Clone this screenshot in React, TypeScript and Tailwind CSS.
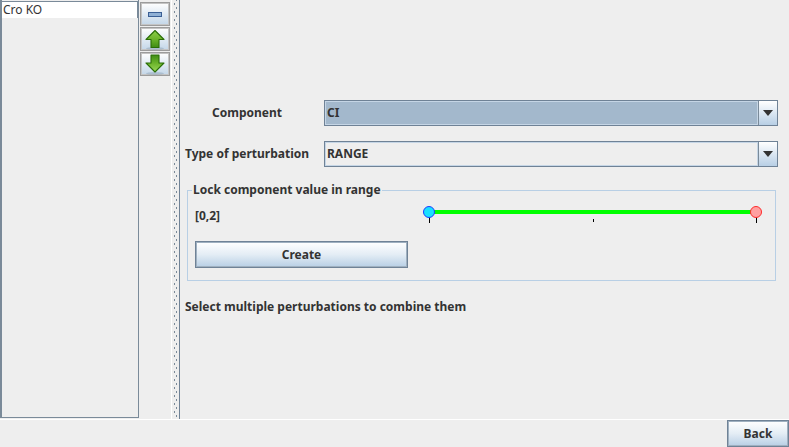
import type { ReactNode } from 'react';

const btnClass =
  'border border-[#6f8296] shadow-[inset_0_0_0_1px_#9fb0c0] bg-gradient-to-b from-[#ffffff] via-[#e4edf5] to-[#b8cfe5] text-[#333333] font-bold';

function Arrow({ up }: { up?: boolean }) {
  const id = up ? 'gu' : 'gd';
  return (
    <svg width="24" height="24" viewBox="0 0 24 24">
      <defs>
        <linearGradient id={id} x1="0" y1="0" x2="0" y2="1">
          <stop offset="0" stopColor={up ? '#8ed04c' : '#3f8c14'} />
          <stop offset="0.5" stopColor="#6db52c" />
          <stop offset="1" stopColor={up ? '#3f8c14' : '#9ad85a'} />
        </linearGradient>
      </defs>
      <ellipse cx="12" cy="21.5" rx="9" ry="1.5" fill="#8fa3b5" opacity="0.5" />
      <path
        d={
          up
            ? 'M12 3.5 L21 12.5 L16 12.5 L16 20.5 L8 20.5 L8 12.5 L3 12.5 Z'
            : 'M8 3 L16 3 L16 11 L21 11 L12 20 L3 11 L8 11 Z'
        }
        fill={`url(#${id})`}
        stroke="#2a6e08"
        strokeWidth="1.1"
        strokeLinejoin="round"
      />
    </svg>
  );
}

function ToolButton({ children }: { children: ReactNode }) {
  return (
    <div className="w-[30px] h-[24px] flex items-center justify-center border border-[#9c9c9c] shadow-[inset_0_0_0_1px_#c4c4c4] bg-gradient-to-b from-[#ffffff] to-[#c3d6e8]">
      {children}
    </div>
  );
}

function Combo({ value, selected }: { value: string; selected?: boolean }) {
  return (
    <div className="flex flex-1 h-[26px] border border-[#6f8296]">
      <div
        className={`flex-1 flex items-center pl-[1px] border border-[#c5d5e5] text-[#333333] font-bold ${
          selected ? 'bg-[#a3b8cc]' : 'bg-[#eeeeee]'
        }`}
      >
        {value}
      </div>
      <div className="w-[19px] flex items-center justify-center border-l border-[#7a8a99] bg-gradient-to-b from-[#ffffff] to-[#b8cfe5]">
        <svg width="10" height="6" viewBox="0 0 10 6">
          <path d="M0 0 H10 L5 6 Z" fill="#333333" />
        </svg>
      </div>
    </div>
  );
}

export default function App() {
  return (
    <div
      className="w-[789px] h-[447px] flex flex-col bg-[#eeeeee] overflow-hidden text-[12px] text-[#333333]"
      style={{ fontFamily: '"Noto Sans", sans-serif' }}
    >
      <div className="flex h-[419px]">
        {/* list */}
        <div className="w-[139px] h-[418px] border-l-2 border-r border-b border-[#7a8a99] pt-[1px] bg-[#eeeeee]">
          <div className="h-[17px] bg-white border-t border-r border-[#7a8a99] flex items-center pl-[1px]">Cro KO</div>
        </div>

        {/* toolbar */}
        <div className="w-[33px] pl-[1px] pt-[2px] flex flex-col gap-[1px] border-r border-white">
          <ToolButton>
            <div className="w-[14px] h-[5px] bg-[#8fb0d5] border border-[#3a5f95]" />
          </ToolButton>
          <ToolButton>
            <Arrow up />
          </ToolButton>
          <ToolButton>
            <Arrow />
          </ToolButton>
        </div>

        {/* split divider */}
        <div className="w-[8px] flex justify-center border-r border-[#6f8296]">
          <div className="w-[5px] h-full bg-[image:radial-gradient(circle,#7a8a99_0.7px,transparent_1px),radial-gradient(circle,#7a8a99_0.7px,transparent_1px)] bg-[length:5px_8px] [background-position:-1px_0,1px_4px]" />
        </div>

        {/* form */}
        <div className="flex-1 flex flex-col pt-[100px] pr-[11px] pl-[5px]">
          <div className="flex items-center h-[26px]">
            <div className="w-[139px] pl-[27px] font-bold">Component</div>
            <Combo value="CI" selected />
          </div>
          <div className="flex items-center h-[26px] mt-[15px]">
            <div className="w-[139px] font-bold">Type of perturbation</div>
            <Combo value="RANGE" />
          </div>

          <fieldset className="mt-[15px] mx-[2px] h-[99px] border border-[#b8cfe5] px-[7px]">
            <legend className="font-bold px-[1px] -ml-[3px] leading-[16px]">Lock component value in range</legend>
            <div className="flex items-center h-[36px]">
              <div className="w-[226px] font-bold">[0,2]</div>
              <svg width="344" height="24" viewBox="0 0 344 24">
                <rect x="8" y="6" width="327" height="4" fill="#00ff00" />
                <path d="M8.5 13 V19 M172.5 15 V18 M335.5 13 V19" stroke="#000000" strokeWidth="1" />
                <circle cx="8" cy="8" r="5.5" fill="#19e0ff" stroke="#1a3dff" strokeWidth="1" />
                <circle cx="335" cy="8" r="5.5" fill="#ffa0a0" stroke="#ff2a2a" strokeWidth="1" />
              </svg>
            </div>
            <button className={`${btnClass} block w-[213px] h-[27px] mt-[7px]`}>Create</button>
          </fieldset>

          <div className="font-bold mt-[17px]">Select multiple perturbations to combine them</div>
        </div>
      </div>

      {/* bottom bar */}
      <div className="h-[28px] border-t border-white flex justify-end">
        <button className={`${btnClass} w-[62px] h-[27px]`}>Back</button>
      </div>
    </div>
  );
}
